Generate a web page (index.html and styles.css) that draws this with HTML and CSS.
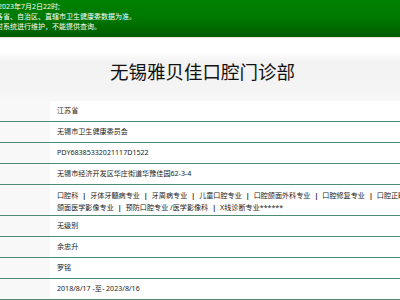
FILE: index.html
```html
<!DOCTYPE html>
<html lang="zh-CN">
<head>
    <meta charset="UTF-8">
    <meta name="viewport" content="width=device-width, initial-scale=1.0">
    <title>无锡雅贝佳口腔门诊部</title>
    <link rel="stylesheet" href="styles.css">
</head>
<body>
    <div class="notice">
        <p class="first">2023年7月2日22时;</p>
        <p>各省、自治区、直辖市卫生健康委数据为准。</p>
        <p>时系统进行维护，不能提供查询。</p>
    </div>

    <div class="title-bar">
        <h1 class="title">无锡雅贝佳口腔门诊部</h1>
    </div>

    <table class="info">
        <tr><td class="label"></td><td class="value">江苏省</td></tr>
        <tr><td class="label"></td><td class="value">无锡市卫生健康委员会</td></tr>
        <tr><td class="label"></td><td class="value">PDY68385332021117D1522</td></tr>
        <tr><td class="label"></td><td class="value">无锡市经济开发区华庄街道华豫佳园62-3-4</td></tr>
        <tr class="multi">
            <td class="label"></td>
            <td class="value">口腔科<span class="sep">|</span>牙体牙髓病专业<span class="sep">|</span>牙周病专业<span class="sep">|</span>儿童口腔专业<span class="sep">|</span>口腔颌面外科专业<span class="sep">|</span>口腔修复专业<span class="sep">|</span>口腔正畸专业<span class="sep">|</span>口腔<br>颌面医学影像专业<span class="sep">|</span>预防口腔专业 /医学影像科<span class="sep">|</span>X线诊断专业******</td>
        </tr>
        <tr><td class="label"></td><td class="value">无级别</td></tr>
        <tr><td class="label"></td><td class="value">余忠升</td></tr>
        <tr><td class="label"></td><td class="value">罗铭</td></tr>
        <tr><td class="label"></td><td class="value">2018/8/17 -至- 2023/8/16</td></tr>
    </table>
</body>
</html>
```

FILE: styles.css
```css
* {
    margin: 0;
    padding: 0;
    box-sizing: border-box;
}

body {
    width: 400px;
    overflow: hidden;
    background: #fff;
    font-family: "Noto Sans", "Noto Sans CJK SC", sans-serif;
}

.notice {
    height: 38px;
    padding-top: 2px;
    background: linear-gradient(to bottom, #008200 0%, #007800 50%, #005c00 100%);
    border-bottom: 1px solid #e4e9d2;
    color: #fff;
    font-size: 7px;
    line-height: 10px;
    overflow: hidden;
}

.notice p {
    margin-left: -4px;
    white-space: nowrap;
}

.notice p.first {
    margin-left: -2px;
}

.title-bar {
    height: 63px;
    padding: 3px 0 0 5px;
    display: flex;
    align-items: center;
    justify-content: center;
    background: linear-gradient(to bottom, #fff 0px, #fff 14px, #f2f2f2 24px, #f4f4f4 52px, #f9f9f9 63px);
}

.title {
    font-family: "Noto Sans CJK SC", sans-serif;
    font-size: 18.5px;
    font-weight: normal;
    color: #111;
}

.info {
    width: 100%;
    border-collapse: collapse;
    table-layout: fixed;
    font-size: 7.1px;
    color: #222;
}

.info td {
    padding: 4px 0 5px;
    line-height: 11px;
    border-bottom: 1px solid #4e8a72;
    white-space: nowrap;
    overflow: hidden;
}

.info td.label {
    width: 50px;
    background: #f8f8f8;
}

.info tr.multi td {
    padding-top: 4px;
    padding-bottom: 2px;
    line-height: 12px;
}

.info td.value {
    padding-left: 7px;
}

.sep {
    margin: 0 4px;
    font-weight: bold;
    color: #111;
}
```
